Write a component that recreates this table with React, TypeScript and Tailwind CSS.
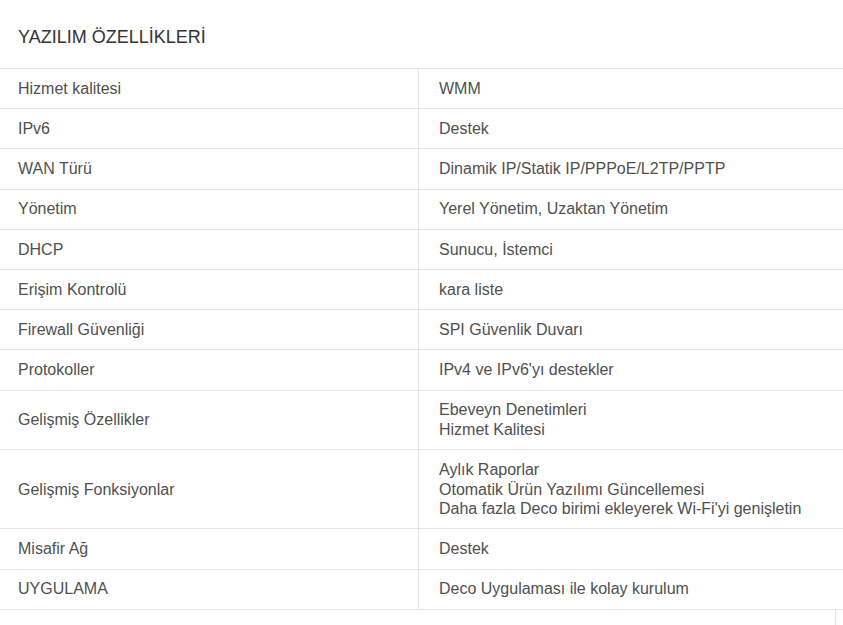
const rows: [string, string[]][] = [
  ["Hizmet kalitesi", ["WMM"]],
  ["IPv6", ["Destek"]],
  ["WAN Türü", ["Dinamik IP/Statik IP/PPPoE/L2TP/PPTP"]],
  ["Yönetim", ["Yerel Yönetim, Uzaktan Yönetim"]],
  ["DHCP", ["Sunucu, İstemci"]],
  ["Erişim Kontrolü", ["kara liste"]],
  ["Firewall Güvenliği", ["SPI Güvenlik Duvarı"]],
  ["Protokoller", ["IPv4 ve IPv6'yı destekler"]],
  ["Gelişmiş Özellikler", ["Ebeveyn Denetimleri", "Hizmet Kalitesi"]],
  [
    "Gelişmiş Fonksiyonlar",
    [
      "Aylık Raporlar",
      "Otomatik Ürün Yazılımı Güncellemesi",
      "Daha fazla Deco birimi ekleyerek Wi-Fi'yi genişletin",
    ],
  ],
  ["Misafir Ağ", ["Destek"]],
  ["UYGULAMA", ["Deco Uygulaması ile kolay kurulum"]],
];

export default function App() {
  return (
    <div className="min-h-[625px] w-[836px] border-r border-[#e4e4ea] bg-white font-['Liberation_Sans',Arial,sans-serif]">
      <div className="mt-[6px] w-[843px] bg-white">
        <div className="flex h-[63px] items-center border-b border-[#e4e4ea] pl-[18px] text-[18px] text-[#333333]">
          YAZILIM ÖZELLİKLERİ
        </div>
        <div className="text-[16px] leading-[19.5px] text-[#505050]">
          {rows.map(([label, values]) => (
            <div key={label} className="grid grid-cols-[419px_1fr] border-b border-[#e4e4ea]">
              <div className="flex items-center border-r border-[#e4e4ea] py-[9.85px] pl-[18px]">
                {label}
              </div>
              <div className="flex flex-col justify-center py-[9.85px] pl-5">
                {values.map((v) => (
                  <span key={v}>{v}</span>
                ))}
              </div>
            </div>
          ))}
        </div>
      </div>
    </div>
  );
}
